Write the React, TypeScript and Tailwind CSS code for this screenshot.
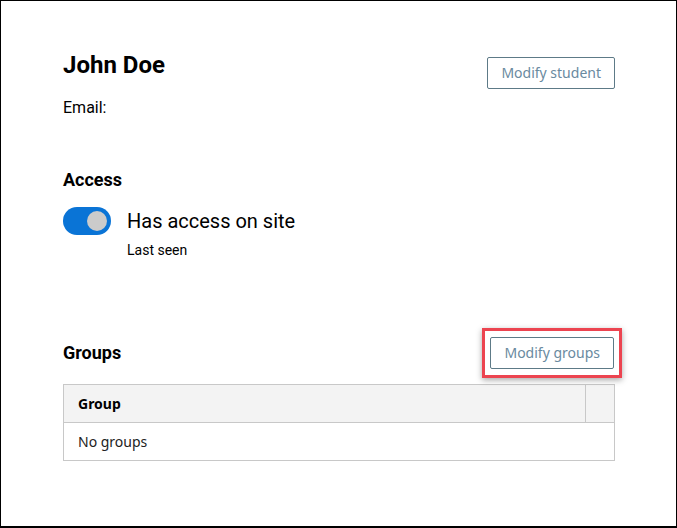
import React, { useState } from 'react';

const uiFont = { fontFamily: '"Segoe UI", "Noto Sans", sans-serif' };

const OutlineButton: React.FC<{ label: string }> = ({ label }) => (
  <button
    type="button"
    style={uiFont}
    className="h-[32px] px-[13px] border border-[#5d7a87] rounded-[2px] bg-white text-[14px] text-[#6a8aa0] leading-none"
  >
    {label}
  </button>
);

const Toggle: React.FC<{ on: boolean; onChange: (v: boolean) => void }> = ({ on, onChange }) => (
  <button
    type="button"
    onClick={() => onChange(!on)}
    className={`w-[48px] h-[28px] rounded-full p-[4px] flex items-center ${on ? 'bg-[#0a74d6] justify-end' : 'bg-gray-300 justify-start'}`}
  >
    <span className="block w-[20px] h-[20px] rounded-full bg-[#cbcbcb]" />
  </button>
);

const App: React.FC = () => {
  const [access, setAccess] = useState(true);

  return (
    <div
      className="w-[677px] h-[528px] bg-white border border-black border-b-2 text-black"
      style={{ fontFamily: 'Roboto, "Liberation Sans", sans-serif' }}
    >
      <div className="pl-[62px] pr-[61px] pt-[50px]">
        {/* student header */}
        <div className="flex justify-between items-start">
          <div>
            <h1 className="text-[24px] leading-[28px] font-bold">John Doe</h1>
            <p className="text-[16px] leading-[20px] mt-[19px]">Email:</p>
          </div>
          <div className="mt-[6px]">
            <OutlineButton label="Modify student" />
          </div>
        </div>

        {/* access */}
        <h2 className="text-[18px] leading-[24px] font-bold mt-[50px]">Access</h2>
        <div className="flex items-center gap-[16px] mt-[15px]">
          <Toggle on={access} onChange={setAccess} />
          <span className="text-[20px] leading-[24px]">Has access on site</span>
        </div>
        <p className="text-[14px] leading-[18px] ml-[64px] mt-[6px]">Last seen</p>

        {/* groups */}
        <div className="flex justify-between items-center mt-[69px]">
          <h2 className="text-[18px] leading-[24px] font-bold">Groups</h2>
          <div className="px-[5px] py-[6px] border-[3px] border-[#ec4450] shadow-[0_2px_6px_rgba(0,0,0,0.35)] -mr-[7px]">
            <OutlineButton label="Modify groups" />
          </div>
        </div>

        <table className="w-full mt-[6px] border-collapse text-[14px]" style={uiFont}>
          <thead>
            <tr className="bg-[#f3f3f3]">
              <th className="h-[38px] border border-[#c8c8c8] text-left font-bold pl-[14px]">Group</th>
              <th className="w-[29px] border border-[#c8c8c8]" />
            </tr>
          </thead>
          <tbody>
            <tr>
              <td colSpan={2} className="h-[38px] border border-[#c8c8c8] pl-[14px] text-[#222]">
                No groups
              </td>
            </tr>
          </tbody>
        </table>
      </div>
    </div>
  );
};

export default App;
